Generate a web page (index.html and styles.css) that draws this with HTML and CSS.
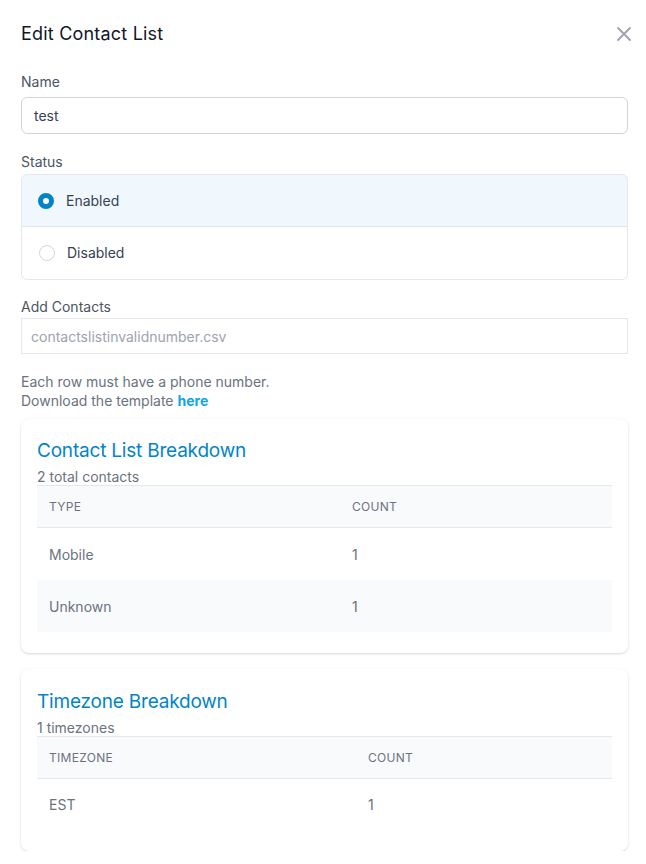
FILE: index.html
```html
<!DOCTYPE html>
<html lang="en">
<head>
<meta charset="utf-8">
<title>Edit Contact List</title>
<link rel="stylesheet" href="styles.css">
</head>
<body>
<div class="dialog">
  <div class="header">
    <h1 class="title">Edit Contact List</h1>
    <button class="close" aria-label="Close">
      <svg width="16" height="16" viewBox="0 0 16 16"><path d="M2 2L14 14M14 2L2 14" stroke="#9ca3af" stroke-width="1.8" stroke-linecap="round" fill="none"/></svg>
    </button>
  </div>

  <div class="field field-name">
    <label class="label">Name</label>
    <div class="input">test</div>
  </div>

  <div class="field field-status">
    <label class="label">Status</label>
    <div class="radio-group">
      <div class="radio-row checked">
        <span class="radio on"></span>
        <span class="radio-text">Enabled</span>
      </div>
      <div class="radio-row">
        <span class="radio"></span>
        <span class="radio-text">Disabled</span>
      </div>
    </div>
  </div>

  <div class="field field-file">
    <label class="label">Add Contacts</label>
    <div class="file">contactslistinvalidnumber.csv</div>
  </div>

  <p class="help">Each row must have a phone number.<br>Download the template <a class="link" href="#">here</a></p>

  <div class="card">
    <h2 class="card-title">Contact List Breakdown</h2>
    <div class="card-sub">2 total contacts</div>
    <table class="table">
      <thead>
        <tr><th class="col-type">Type</th><th>Count</th></tr>
      </thead>
      <tbody>
        <tr><td>Mobile</td><td>1</td></tr>
        <tr class="alt"><td>Unknown</td><td>1</td></tr>
      </tbody>
    </table>
  </div>

  <div class="card card-tz">
    <h2 class="card-title">Timezone Breakdown</h2>
    <div class="card-sub">1 timezones</div>
    <table class="table">
      <thead>
        <tr><th class="col-tz">Timezone</th><th>Count</th></tr>
      </thead>
      <tbody>
        <tr><td>EST</td><td>1</td></tr>
      </tbody>
    </table>
  </div>
</div>
</body>
</html>
```

FILE: styles.css
```css
* { box-sizing: border-box; }
html, body { margin: 0; padding: 0; background: #ffffff; }
body {
  font-family: Inter, "Noto Sans", "Liberation Sans", sans-serif;
  color: #374151;
}
.dialog {
  width: 646px;
  padding: 22px 18px 0 21px;
}
.header {
  display: flex;
  align-items: center;
  justify-content: space-between;
  height: 24px;
}
.title {
  margin: 0;
  font-size: 18px;
  font-weight: 400;
  line-height: 24px;
  color: #111827;
  letter-spacing: 0.2px;
}
.close {
  border: 0;
  background: none;
  padding: 0;
  margin-right: -4px;
  width: 16px;
  height: 16px;
  display: flex;
}
.field { display: flex; flex-direction: column; }
.field-name { margin-top: 26px; }
.field-status { margin-top: 18px; }
.field-file { margin-top: 17px; }
.label {
  font-size: 14px;
  line-height: 20px;
  color: #4b5563;
}
.input {
  margin-top: 5px;
  height: 37px;
  border: 1px solid #d1d5db;
  border-radius: 6px;
  padding: 0 12px;
  display: flex;
  align-items: center;
  font-size: 14px;
  color: #374151;
}
.radio-group {
  margin-top: 2px;
  border: 1px solid #e5e7eb;
  border-radius: 6px;
  overflow: hidden;
}
.radio-row {
  height: 53px;
  display: flex;
  align-items: center;
  padding-left: 16px;
  gap: 12px;
  border: 1px solid transparent;
  border-radius: 6px 6px 0 0;
}
.radio-row + .radio-row { border-top: 0; height: 52px; }
.radio-row.checked {
  background: #f0f8fe;
  border-color: #bae6fd;
  border-bottom-color: #dbe6ee;
  margin: -1px -1px 0 -1px;
}
.radio {
  width: 16px;
  height: 16px;
  border-radius: 50%;
  border: 1px solid #d1d5db;
  background: #fff;
  flex: none;
}
.radio.on {
  border: 5px solid #0284c7;
  background: #fff;
}
.radio-text {
  font-size: 14px;
  color: #374151;
}
.file {
  margin-top: 1px;
  height: 36px;
  border: 1px solid #e5e7eb;
  padding: 0 9px;
  display: flex;
  align-items: center;
  font-size: 14px;
  color: #9ca3af;
}
.help {
  margin: 18px 0 0 0;
  font-size: 14px;
  line-height: 19px;
  color: #6b7280;
}
.link {
  color: #0ea5e9;
  font-weight: 700;
  text-decoration: none;
}
.card {
  margin-top: 9px;
  border-radius: 8px;
  box-shadow: 0 1px 3px rgba(0,0,0,0.12), 0 1px 2px rgba(0,0,0,0.04);
  padding: 19px 16px 21px 16px;
  background: #fff;
}
.card-tz { margin-top: 16px; padding-top: 20px; }
.card-title {
  margin: 0;
  font-size: 19px;
  font-weight: 400;
  line-height: 26px;
  color: #0284c7;
  letter-spacing: -0.2px;
}
.card-sub {
  margin-top: 5px;
  font-size: 14px;
  line-height: 16px;
  color: #6b7280;
}
.table {
  width: 100%;
  border-collapse: collapse;
  font-size: 14px;
}
.table th {
  text-align: left;
  font-weight: 400;
  font-size: 12px;
  text-transform: uppercase;
  letter-spacing: 0.3px;
  color: #6b7280;
  height: 42px;
  padding: 0 12px;
  background: #f9fafb;
  border-top: 1px solid #e5e7eb;
  border-bottom: 1px solid #e5e7eb;
}
.table td {
  height: 52px;
  padding: 1px 12px 0 12px;
  color: #6b7280;
}
.table tr.alt td { background: #f9fafb; }
.col-type { width: 303px; }
.col-tz { width: 319px; }
```
